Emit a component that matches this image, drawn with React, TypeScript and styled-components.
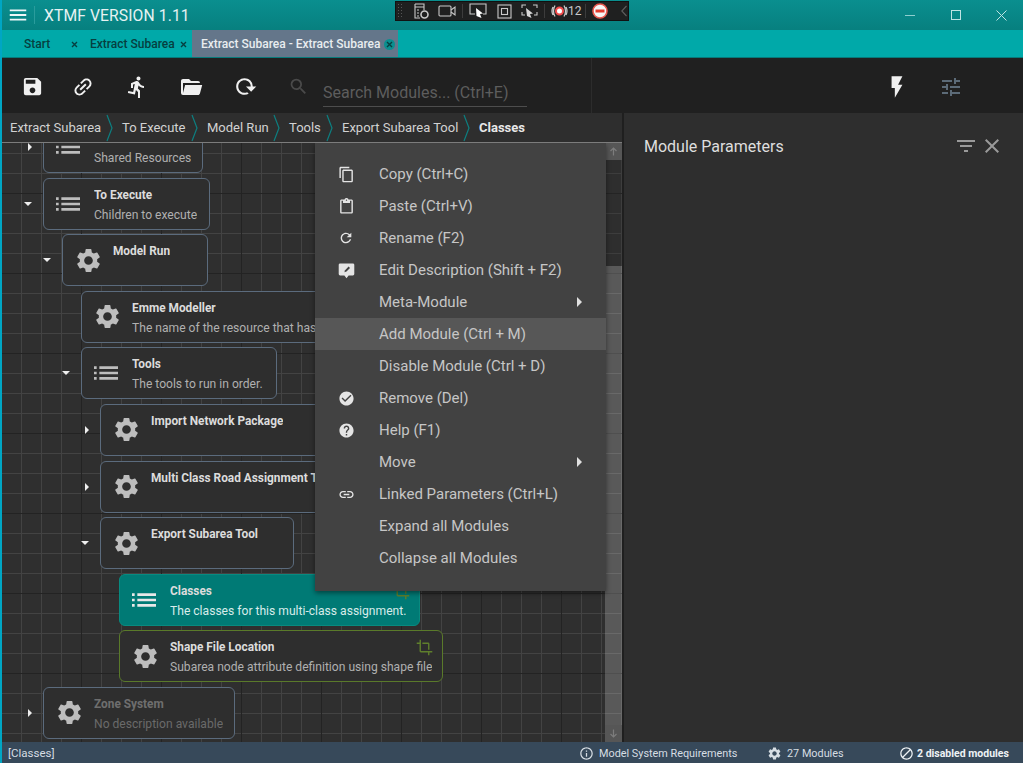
import React from "react";
import styled, { createGlobalStyle, css } from "styled-components";
import {
  MdSave, MdLink, MdDirectionsRun, MdRefresh, MdSearch, MdFlashOn, MdTune,
  MdFilterList, MdClose, MdSettings, MdList, MdContentCopy, MdContentPaste,
  MdCheckCircle, MdHelp, MdCrop, MdInfoOutline, MdBlock, MdMenu,
} from "react-icons/md";

const Global = createGlobalStyle`
  html, body { margin: 0; padding: 0; background: #2e2e2e; }
  * { box-sizing: border-box; }
  body { font-family: Roboto, "Liberation Sans", sans-serif; }
`;

const Window = styled.div`
  width: 1023px; height: 763px; display: flex; flex-direction: column; overflow: hidden;
  position: relative; border-left: 2px solid #00a6c4;
`;
const TitleBar = styled.header`
  height: 30px; margin-left: -2px; display: flex; align-items: center; color: #e6f2f2;
  background: linear-gradient(#0a8f8f, #07807f);
`;
const Burger = styled.div`
  width: 35px; height: 18px; display: flex; align-items: center; justify-content: center;
  border-right: 1px solid #2a9c9c; padding-left: 1px;
`;
const AppTitle = styled.h1`
  margin: 0 0 0 9px; font-size: 15.7px; font-weight: 400; letter-spacing: 0.1px; flex: 1; white-space: nowrap;
`;
const WinBtn = styled.div`
  width: ${p => p.$w || 46}px; height: 30px; display: flex; align-items: center; justify-content: center;
`;

const Overlay = styled.div`
  position: absolute; left: 393px; top: 1px; width: 234px; height: 20px; background: #1f2020;
  border: 1px solid #111; display: flex; align-items: center; color: #c9c9c9;
  font-size: 12px;
`;
const Gripper = styled.div`
  width: 6px; height: 16px; margin: 0 6px 0 1px;
  background-image: radial-gradient(#555 0.7px, transparent 0.8px); background-size: 3px 3px;
`;
const Sep = styled.span`
  width: 1px; height: 14px; background: #3c3c3c;
  margin: 0 ${p => p.$m}px;
`;
const OIcon = styled.svg`
  flex: none; margin-left: ${p => p.$ml || 0}px; fill: none; stroke: #c9c9c9; stroke-width: 1.1;
`;

const TabBar = styled.nav`
  height: 28px; margin-left: -2px; padding-left: 24px; display: flex; align-items: stretch; background: #00a9a9;
  border-bottom: 1px solid #067a7a;
`;
const Tab = styled.div`
  display: flex; align-items: center; font-size: 12px; font-weight: 500; color: ${p => (p.$active ? "#e9edf0" : "#063f40")};
  width: ${p => p.$w}px; margin-left: ${p => p.$ml || 0}px; padding: 1px 0 0 ${p => p.$pl || 0}px;
  background: ${p => (p.$active ? "#64768a" : "transparent")}; white-space: nowrap;
`;
const TabText = styled.span`flex: 1;`;
const TabClose = styled.span`
  width: 11px; height: 11px; border-radius: 50%; display: flex; align-items: center; justify-content: center;
  margin-right: ${p => p.$mr || 0}px; background: ${p => (p.$active ? "#0a8f8f" : "transparent")}; color: #063f40;
  svg { display: block; }
`;

const Toolbar = styled.div`
  height: 55px; background: #202020; display: flex; align-items: center; position: relative;
`;
const ToolLeft = styled.div`
  width: 590px; height: 100%; display: flex; align-items: center; padding: 2px 0 0 17px; border-right: 1px solid #2c2c2c;
`;
const ToolBtn = styled.div`
  width: 27px; height: 27px; display: flex; align-items: center; justify-content: center; color: ${p => p.$c || "#f0f0f0"};
  margin-right: ${p => p.$mr ?? 27}px; flex: none;
`;
const SearchField = styled.div`
  width: 204px; height: 27px; align-self: flex-start; margin: 20px 0 0 11px; border-bottom: 1px solid #4d4d4d; color: #5d5d5d; font-size: 16px;
  line-height: 26px; white-space: nowrap;
`;
const ToolRight = styled.div`
  flex: 1; display: flex; align-items: center; padding: 2px 0 0 291px; height: 100%;
`;

const Main = styled.div`flex: 1; display: flex; min-height: 0;`;
const LeftPane = styled.section`
  width: 620px; display: flex; flex-direction: column; flex: none;
`;
const Crumbs = styled.div`
  height: 30px; padding-left: 8px; display: flex; align-items: center; background: #2e2e2e; font-size: 13px; color: #d2d2d2;
  border-bottom: 1px solid #7c7c7c; white-space: nowrap;
`;
const Crumb = styled.span`
  font-weight: ${p => (p.$on ? 700 : 400)}; color: ${p => (p.$on ? "#e8e8e8" : "#d2d2d2")};
  width: ${p => p.$w ? p.$w + "px" : "auto"}; display: flex; align-items: center; height: 100%;
`;
const CrumbLabel = styled.span`flex: 1;`;
const CrumbGap = styled.span`width: 9px; flex: none;`;
const Splitter = styled.div`width: 2px; flex: none; background: #1f1f1f;`;

const CanvasArea = styled.div`
  flex: 1; min-height: 0; display: flex; position: relative; overflow: hidden;
  background-color: #2f2f2f;
  background-image:
    linear-gradient(90deg, #232323 1px, transparent 1px),
    linear-gradient(#232323 1px, transparent 1px),
    linear-gradient(90deg, #434343 1px, transparent 1px),
    linear-gradient(#434343 1px, transparent 1px);
  background-size: 80px 80px, 80px 80px, 20px 20px, 20px 20px;
  background-position: 79px 0, 0 50px, -1px 0, 0 10px;
`;
const Tree = styled.div`
  flex: 1; min-width: 0; overflow: hidden; display: flex; flex-direction: column; gap: 4.6px; margin-top: -22px;
`;
const Row = styled.div`
  flex: none; display: flex; align-items: center; padding-left: ${p => 17 + p.$depth * 19}px;
`;
const Expander = styled.span`
  width: 24px; height: 52px; flex: none; display: flex; align-items: center; justify-content: flex-start; padding-left: 8px; color: #eee;
`;
const Node = styled.div`
  position: relative; flex: none; width: ${p => p.$w}px; height: 52px; border-radius: 6px; display: flex;
  border: 1px solid #5b6b7d; background: #2e2e2e;
  ${p => p.$kind === "selected" && css`background: #007a75; border-color: #088a80;`}
  ${p => p.$kind === "green" && css`border-color: #5a7a2a;`}
`;
const NodeIcon = styled.div`
  width: 50px; flex: none; display: flex; align-items: center; justify-content: center; color: ${p => (p.$light ? "#e8e8e8" : "#bdbdbd")};
  padding: ${p => (p.$list ? "0 2px 0 0" : "0 0 0 1px")};
`;
const NodeText = styled.div`
  padding-top: 9px; min-width: 0; overflow: hidden; white-space: nowrap; color: ${p => (p.$dim ? "#6e6e6e" : "#dcdcdc")};
`;
const NodeTitle = styled.div`font-size: 11.85px; font-weight: 700; line-height: 15px; height: 20px;`;
const NodeDesc = styled.div`
  font-size: 12.1px; line-height: 15px; color: ${p => (p.$dim ? "#6a6a6a" : p.$light ? "#d8ecea" : "#b0b0b0")};
`;
const CropBadge = styled.div`
  position: absolute; right: 9px; top: 8px; color: #5f7f2c; display: flex;
`;

const ScrollTrack = styled.div`
  width: 17px; flex: none; display: flex; flex-direction: column; background: rgba(255,255,255,0.03); margin-right: 0;
`;
const ScrollBtn = styled.div`
  height: 17px; display: flex; align-items: center; justify-content: center; color: #7d7d7d; background: #565656;
  flex: none;
`;
const ScrollBlank = styled.div`height: 106px; flex: none; background: rgba(20,20,20,0.2);`;
const ScrollThumb = styled.div`flex: 1; background: rgba(255,255,255,0.18);`;

const Menu = styled.div`
  position: absolute; left: 313px; top: 0; width: 291px; height: 448px; padding-top: 15px; background: #424242;
  box-shadow: 0 2px 5px rgba(0,0,0,0.45); color: #c6c6c6; font-size: 15px;
`;
const MenuItem = styled.div`
  height: 32px; display: flex; align-items: center; position: relative; background: ${p => (p.$hover ? "#575757" : "transparent")};
`;
const MenuIcon = styled.span`
  width: 64px; flex: none; display: flex; justify-content: center; padding-right: 2px; color: #e4e4e4;
`;
const SubArrow = styled.span`
  position: absolute; right: 24px; top: 11px; border-left: 5px solid #e0e0e0; border-top: 5px solid transparent; border-bottom: 5px solid transparent;
`;

const RightPanel = styled.aside`
  flex: 1; background: #2e2e2e; display: flex; align-items: flex-start; padding: 22px 19px 0 20px; color: #dedede;
`;
const PanelTitle = styled.h2`margin: 0; flex: 1; font-size: 16px; font-weight: 400; line-height: 24px;`;
const PanelIcon = styled.span`
  display: flex; color: #9a9a9a; margin: -1px 0 0 ${p => p.$ml || 0}px;
`;

const StatusBar = styled.footer`
  height: 21px; background: #37495a; display: flex; align-items: center; color: #d6dde3; font-size: 11px; padding: 1px 0 0 6px; white-space: nowrap;
`;
const StatusLeft = styled.span`font-size: 11.5px; width: 571px;`;
const StatusItem = styled.span`
  display: flex; align-items: center; gap: ${p => (p.$b ? 3 : 5)}px; width: ${p => p.$w}px; font-weight: ${p => (p.$b ? 700 : 400)};
  font-size: ${p => (p.$b ? 10.5 : 10.85)}px;
  color: ${p => (p.$b ? "#eef2f5" : "#d6dde3")};
`;

const Tri = styled.span`
  display: block;
  ${p => p.$down
    ? css`border-top: 4px solid #eee; border-left: 4.5px solid transparent; border-right: 4.5px solid transparent; margin-left: -3px;`
    : css`border-left: 4px solid #eee; border-top: 4.5px solid transparent; border-bottom: 4.5px solid transparent; margin-left: 1px;`}
`;

const Chevron = () => (
  <svg width="7" height="28" viewBox="0 0 7 28" style={{ flex: "none" }}>
    <path d="M1 1 L6 14 L1 27" fill="none" stroke="#0d7f80" strokeWidth="1.2" />
  </svg>
);
const FolderOpen = () => (
  <svg width="24" height="24" viewBox="0 0 24 24" fill="currentColor">
    <path d="M19 20H4a2 2 0 0 1-2-2V6c0-1.11.89-2 2-2h6l2 2h7a2 2 0 0 1 2 2H4v10l2.14-8h17.07l-2.28 8.5c-.23.87-1.01 1.5-1.93 1.5z" />
  </svg>
);
const EditBubble = () => (
  <svg width="17" height="17" viewBox="0 0 24 24">
    <path d="M3 2h18a2 2 0 0 1 2 2v13a2 2 0 0 1-2 2h-6l-3 4-3-4H3a2 2 0 0 1-2-2V4a2 2 0 0 1 2-2z" fill="currentColor" />
    <path d="M9 14.5l1-3 5-5 2 2-5 5z" fill="#424242" />
  </svg>
);

const crumbs: [string, number][] = [
  ["Extract Subarea", 112], ["To Execute", 85], ["Model Run", 82], ["Tools", 53], ["Export Subarea Tool", 137],
];

type N = { d: number; w: number; icon: "list" | "gear"; title: string; desc?: string; exp?: "r" | "d"; kind?: string; crop?: boolean; dim?: boolean };
const nodes: N[] = [
  { d: 0, w: 160, icon: "list", title: "", desc: "Shared Resources", exp: "r" },
  { d: 0, w: 167, icon: "list", title: "To Execute", desc: "Children to execute", exp: "d" },
  { d: 1, w: 146, icon: "gear", title: "Model Run", exp: "d" },
  { d: 2, w: 300, icon: "gear", title: "Emme Modeller", desc: "The name of the resource that has" },
  { d: 2, w: 196, icon: "list", title: "Tools", desc: "The tools to run in order.", exp: "d" },
  { d: 3, w: 300, icon: "gear", title: "Import Network Package", exp: "r" },
  { d: 3, w: 300, icon: "gear", title: "Multi Class Road Assignment Tool", exp: "r" },
  { d: 3, w: 194, icon: "gear", title: "Export Subarea Tool", exp: "d" },
  { d: 4, w: 301, icon: "list", title: "Classes", desc: "The classes for this multi-class assignment.", kind: "selected", crop: true },
  { d: 4, w: 324, icon: "gear", title: "Shape File Location", desc: "Subarea node attribute definition using shape file", kind: "green", crop: true },
  { d: 0, w: 192, icon: "gear", title: "Zone System", desc: "No description available", exp: "r", dim: true },
];

const menu: { t: string; i?: React.ReactNode; sub?: boolean; hover?: boolean }[] = [
  { t: "Copy (Ctrl+C)", i: <MdContentCopy size={17} /> },
  { t: "Paste (Ctrl+V)", i: <MdContentPaste size={17} /> },
  { t: "Rename (F2)", i: <MdRefresh size={16} /> },
  { t: "Edit Description (Shift + F2)", i: <EditBubble /> },
  { t: "Meta-Module", sub: true },
  { t: "Add Module (Ctrl + M)", hover: true },
  { t: "Disable Module (Ctrl + D)" },
  { t: "Remove (Del)", i: <MdCheckCircle size={17} /> },
  { t: "Help (F1)", i: <MdHelp size={17} /> },
  { t: "Move", sub: true },
  { t: "Linked Parameters (Ctrl+L)", i: <MdLink size={17} /> },
  { t: "Expand all Modules" },
  { t: "Collapse all Modules" },
];

export default function App() {
  return (
    <>
      <Global />
      <Window>
        <TitleBar>
          <Burger><MdMenu size={22} color="#eef6f6" /></Burger>
          <AppTitle>XTMF VERSION 1.11</AppTitle>
          <WinBtn><svg width="10" height="10" viewBox="0 0 10 10"><path d="M0 5.5H10" stroke="#8fcfcf" /></svg></WinBtn>
          <WinBtn><svg width="10" height="10" viewBox="0 0 10 10"><rect x=".5" y=".5" width="9" height="9" fill="none" stroke="#bfe3e3" /></svg></WinBtn>
          <WinBtn $w={44}><svg width="11" height="11" viewBox="0 0 11 11"><path d="M.5 .5L10.5 10.5M10.5 .5L.5 10.5" stroke="#bfe3e3" /></svg></WinBtn>
        </TitleBar>
        <Overlay>
          <Gripper />
          <OIcon $ml={3} width="18" height="18" viewBox="0 0 18 18">
            <path d="M3 2H12V8M3 2V16H8M3 5H12M5 8H7M5 11H7M5 14H7" />
            <circle cx="12.5" cy="12.5" r="3.5" strokeWidth="1.6" />
          </OIcon>
          <OIcon $ml={8} width="18" height="14" viewBox="0 0 18 14">
            <rect x="1" y="2" width="12" height="10" rx="1" />
            <path d="M13 6L17 3V11L13 8" />
          </OIcon>
          <Sep $m={6} />
          <OIcon width="18" height="16" viewBox="0 0 18 16">
            <path d="M6 11H1V1H17V11H14" />
            <path d="M7 5L14 10.5L11 11L12.5 15L7.5 13Z" fill="#fff" stroke="none" />
          </OIcon>
          <OIcon $ml={10} width="15" height="15" viewBox="0 0 15 15">
            <rect x="1" y="1" width="13" height="13" />
            <rect x="4.5" y="4.5" width="6" height="6" />
          </OIcon>
          <OIcon $ml={9} width="17" height="15" viewBox="0 0 17 15">
            <path d="M1 4V1H5M12 1H16V4M1 8V11H4M16 8V11H13" />
            <path d="M5 4L12 9.5L9 10L10.5 14L6 12Z" fill="#d8d8d8" stroke="none" />
          </OIcon>
          <Sep $m={6} />
          <OIcon width="17" height="14" viewBox="0 0 17 14">
            <path d="M4 1.5Q1 7 4 12.5M13 1.5Q16 7 13 12.5M2 3Q0 7 2 11M15 3Q17 7 15 11" strokeWidth="1.3" />
            <circle cx="8.5" cy="7" r="3.5" stroke="#f04a4a" strokeWidth="2" fill="#fff" />
          </OIcon>
          <span>12</span>
          <Sep $m={3} />
          <OIcon $ml={3} width="16" height="16" viewBox="0 0 16 16">
            <circle cx="8" cy="8" r="7" fill="#f6f6f6" stroke="#e9584f" strokeWidth="1.6" />
            <rect x="3.5" y="6.5" width="9" height="3" fill="#e23b30" stroke="none" />
          </OIcon>
          <OIcon $ml={13} width="6" height="12" viewBox="0 0 6 12">
            <path d="M5.5 1L.8 6L5.5 11" stroke="#5e5e5e" />
          </OIcon>
        </Overlay>
        <TabBar>
          <Tab $w={56}><TabText>Start</TabText><TabClose><Cross /></TabClose></Tab>
          <Tab $w={108} $ml={1} $pl={9}><TabText>Extract Subarea</TabText><TabClose><Cross /></TabClose></Tab>
          <Tab $active $w={206} $ml={3} $pl={9}><TabText>Extract Subarea - Extract Subarea</TabText><TabClose $active $mr={3}><Cross /></TabClose></Tab>
        </TabBar>
        <Toolbar>
          <ToolLeft>
            <ToolBtn $mr={23}><MdSave size={23} /></ToolBtn>
            <ToolBtn><MdLink size={24} style={{ transform: "rotate(-45deg)" }} /></ToolBtn>
            <ToolBtn><MdDirectionsRun size={24} /></ToolBtn>
            <ToolBtn><FolderOpen /></ToolBtn>
            <ToolBtn><MdRefresh size={25} style={{ transform: "rotate(45deg)" }} /></ToolBtn>
            <ToolBtn $c="#4a4a4a" $mr={0}><MdSearch size={21} /></ToolBtn>
            <SearchField>Search Modules... (Ctrl+E)</SearchField>
          </ToolLeft>
          <ToolRight>
            <ToolBtn><MdFlashOn size={26} /></ToolBtn>
            <ToolBtn $c="#5c6b78" $mr={0}><MdTune size={24} /></ToolBtn>
          </ToolRight>
        </Toolbar>
        <Main>
          <LeftPane>
            <Crumbs>
              {crumbs.map(([c, w]) => (
                <Crumb key={c} $w={w}><CrumbLabel>{c}</CrumbLabel><Chevron /><CrumbGap /></Crumb>
              ))}
              <Crumb $on>Classes</Crumb>
            </Crumbs>
            <CanvasArea>
              <Tree>
                {nodes.map((n, i) => (
                  <Row key={i} $depth={n.d}>
                    <Expander>{n.exp && <Tri $down={n.exp === "d"} />}</Expander>
                    <Node $w={n.w} $kind={n.kind}>
                      <NodeIcon $light={n.kind === "selected"} $list={n.icon === "list"}>
                        {n.icon === "gear" ? <MdSettings size={29} /> : <MdList size={32} />}
                      </NodeIcon>
                      <NodeText $dim={n.dim}>
                        <NodeTitle>{n.title}</NodeTitle>
                        {n.desc && <NodeDesc $dim={n.dim} $light={n.kind === "selected"}>{n.desc}</NodeDesc>}
                      </NodeText>
                      {n.crop && <CropBadge><MdCrop size={17} /></CropBadge>}
                    </Node>
                  </Row>
                ))}
              </Tree>
              <ScrollTrack>
                <ScrollBtn><Arrow /></ScrollBtn>
                <ScrollBlank />
                <ScrollThumb />
                <ScrollBtn><Arrow down /></ScrollBtn>
              </ScrollTrack>
              <Menu>
                {menu.map(m => (
                  <MenuItem key={m.t} $hover={m.hover}>
                    <MenuIcon>{m.i}</MenuIcon>
                    <span>{m.t}</span>
                    {m.sub && <SubArrow />}
                  </MenuItem>
                ))}
              </Menu>
            </CanvasArea>
          </LeftPane>
          <Splitter />
          <RightPanel>
            <PanelTitle>Module Parameters</PanelTitle>
            <PanelIcon><MdFilterList size={24} /></PanelIcon>
            <PanelIcon $ml={2}><MdClose size={24} /></PanelIcon>
          </RightPanel>
        </Main>
        <StatusBar>
          <StatusLeft>[Classes]</StatusLeft>
          <StatusItem $w={188}><MdInfoOutline size={15} />Model System Requirements</StatusItem>
          <StatusItem $w={132}><MdSettings size={15} />27 Modules</StatusItem>
          <StatusItem $b $w={112}><MdBlock size={15} />2 disabled modules</StatusItem>
        </StatusBar>
      </Window>
    </>
  );
}

function Cross() {
  return (
    <svg width="7" height="7" viewBox="0 0 7 7"><path d="M1 1L6 6M6 1L1 6" stroke="#063f40" strokeWidth="1.4" /></svg>
  );
}
function Arrow({ down }: { down?: boolean }) {
  return (
    <svg width="9" height="9" viewBox="0 0 9 9" style={{ transform: down ? "rotate(180deg)" : undefined }}>
      <path d="M4.5 8.5V1M1.5 4L4.5 1L7.5 4" fill="none" stroke="#7d7d7d" strokeWidth="1.2" />
    </svg>
  );
}
